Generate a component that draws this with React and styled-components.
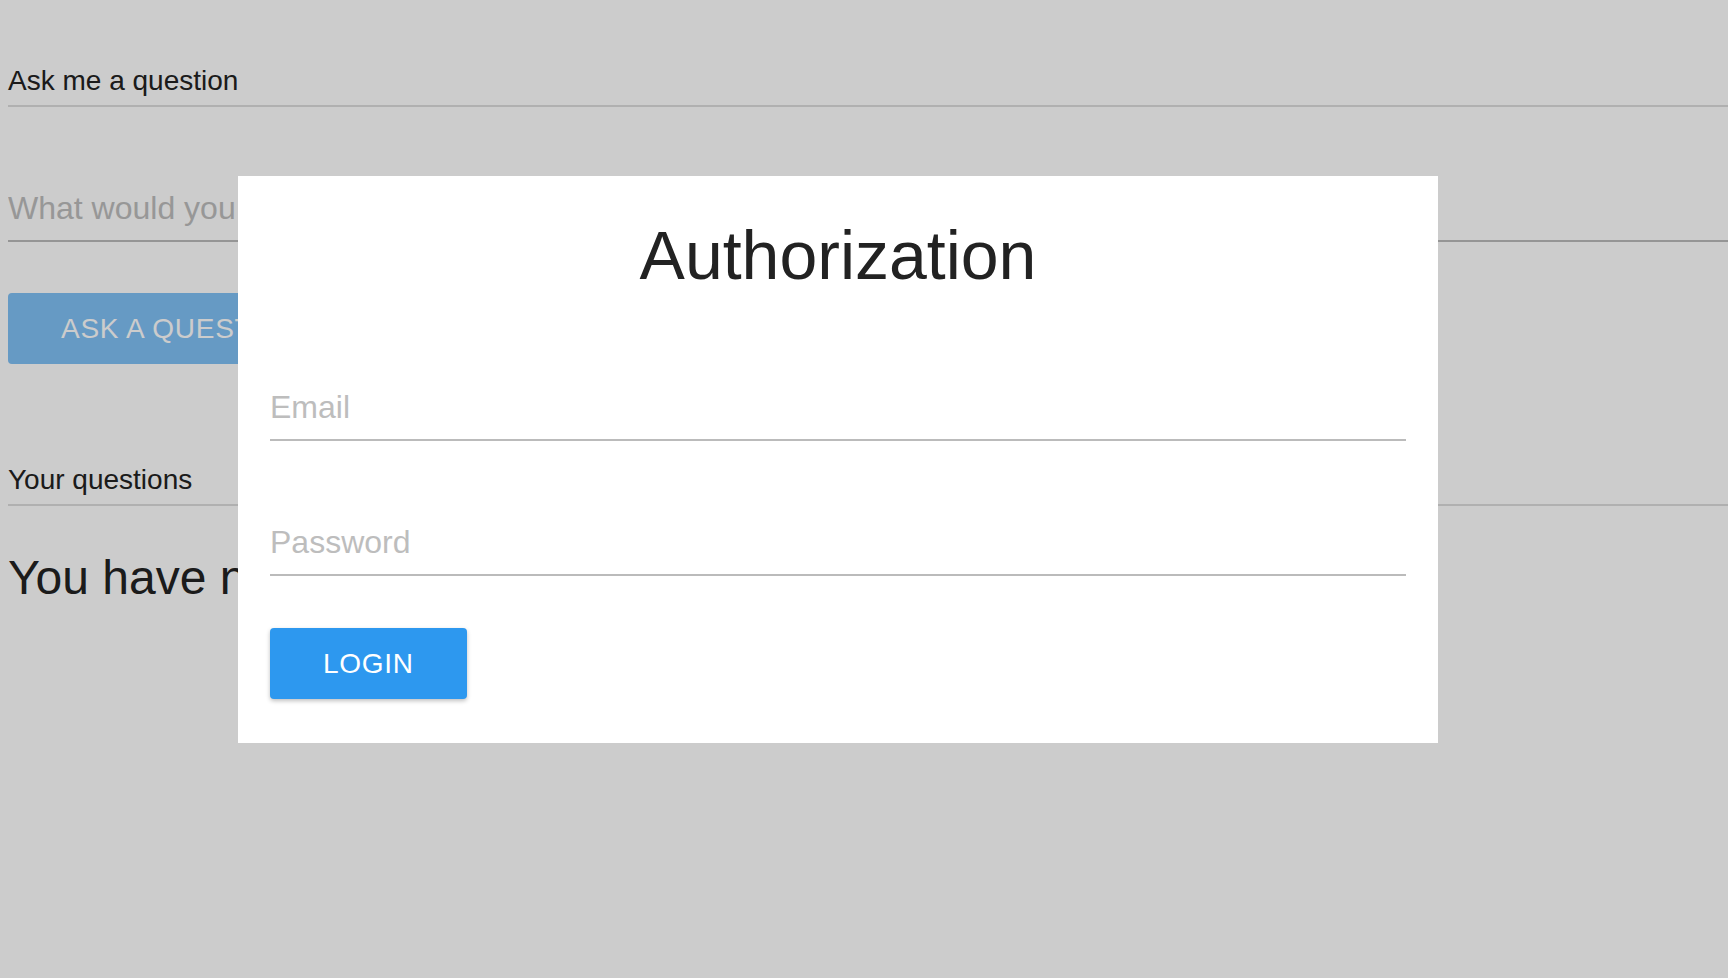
import React from 'react'
import styled, { createGlobalStyle } from 'styled-components'

const GlobalStyle = createGlobalStyle`
  html, body {
    margin: 0;
    padding: 0;
    background: #fff;
    overflow: hidden;
  }
  body {
    font-family: "Liberation Sans", Arial, sans-serif;
    color: #222;
  }
  * { box-sizing: border-box; }
`

const Page = styled.div`
  width: 100%;
  min-height: 978px;
  padding: 65px 0 0 8px;
`
const SectionTitle = styled.h3`
  margin: 0;
  font-size: 28px;
  font-weight: normal;
  line-height: 32px;
  color: #222;
  padding-bottom: 8px;
  border-bottom: 2px solid #ddd;
`
const Field = styled.input`
  display: block;
  width: 100%;
  height: 36px;
  box-sizing: content-box;
  padding: 14px 0;
  margin: ${p => p.$gap || 69}px 0 0;
  border: none;
  border-bottom: 2px solid #bbb;
  background: transparent;
  outline: none;
  font-family: inherit;
  font-size: 32px;
  color: #222;
  &::placeholder { color: #bdbdbd; }
`
const Button = styled.button`
  display: block;
  height: 71px;
  margin-top: ${p => p.$gap || 50}px;
  padding: 0 53px;
  border: none;
  border-radius: 4px;
  background: #2d98ef;
  color: #fff;
  font-family: inherit;
  font-size: 28px;
  letter-spacing: 0.7px;
  text-transform: uppercase;
  box-shadow: 0 2px 4px rgba(0, 0, 0, 0.25);
  cursor: pointer;
  &:disabled {
    opacity: 0.6;
    box-shadow: none;
    cursor: default;
  }
`
const QuestionsBlock = styled.div`
  margin-top: 100px;
`
const Empty = styled.p`
  margin: 44px 0 0;
  font-size: 48px;
  line-height: 55px;
  color: #222;
`
const Overlay = styled.div`
  position: fixed;
  inset: 0;
  background: rgba(0, 0, 0, 0.2);
  display: flex;
  align-items: flex-start;
  padding: 176px 0 0 238px;
`
const Modal = styled.div`
  width: 1200px;
  background: #fff;
  padding: 41px 32px 44px;
`
const ModalTitle = styled.h1`
  margin: 0;
  text-align: center;
  font-size: 68px;
  font-weight: normal;
  line-height: 76px;
  color: #222;
`
const Form = styled.form`
  display: flex;
  flex-direction: column;
  align-items: flex-start;
`

function App() {
  return (
    <>
      <GlobalStyle />
      <Page>
        <SectionTitle>Ask me a question</SectionTitle>
        <Field placeholder="What would you like to ask?" />
        <Button disabled $gap={51}>Ask a question</Button>
        <QuestionsBlock>
          <SectionTitle>Your questions</SectionTitle>
          <Empty>You have no questions yet</Empty>
        </QuestionsBlock>
      </Page>
      <Overlay>
        <Modal>
          <ModalTitle>Authorization</ModalTitle>
          <Form onSubmit={e => e.preventDefault()}>
            <Field type="email" placeholder="Email" $gap={82} />
            <Field type="password" placeholder="Password" />
            <Button type="submit" $gap={52}>Login</Button>
          </Form>
        </Modal>
      </Overlay>
    </>
  )
}

export default App
